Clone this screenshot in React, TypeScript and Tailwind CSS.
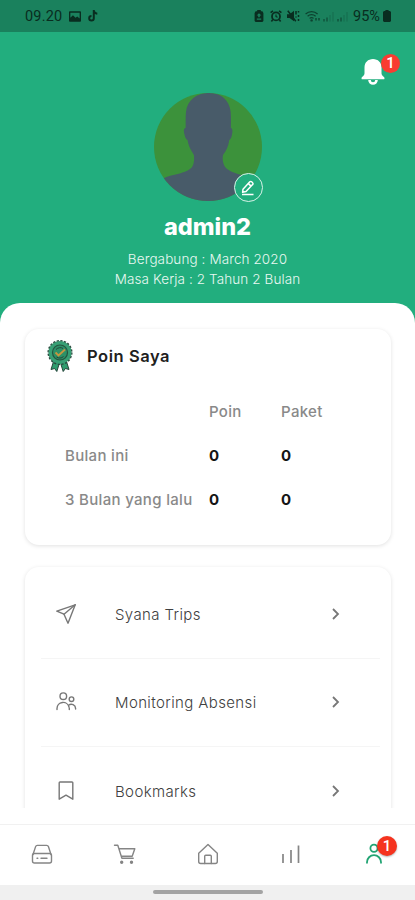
import type { ReactNode } from "react";

type IconProps = {
  className?: string;
  children: ReactNode;
};

function LineIcon({ className = "", children }: IconProps) {
  return (
    <svg
      viewBox="0 0 24 24"
      fill="none"
      stroke="currentColor"
      strokeWidth="1.4"
      strokeLinecap="round"
      strokeLinejoin="round"
      className={`size-6 shrink-0 ${className}`}
    >
      {children}
    </svg>
  );
}

const pointRows = [
  { label: "Bulan ini", poin: 0, paket: 0 },
  { label: "3 Bulan yang lalu", poin: 0, paket: 0 },
];

const menuItems = [
  {
    label: "Syana Trips",
    icon: (
      <LineIcon>
        <path d="M21.2 2.8 2.8 9.2l7.2 3 4 9z" />
        <path d="M21.2 2.8 10 12.2" />
      </LineIcon>
    ),
  },
  {
    label: "Monitoring Absensi",
    icon: (
      <LineIcon>
        <circle cx="9.3" cy="6.2" r="3.3" />
        <path d="M3 19.5v-1a6.1 6.1 0 0 1 12-1.500" />
        <circle cx="17.5" cy="9.2" r="2.3" />
        <path d="M14.6 15.2a4.3 4.3 0 0 1 7 3.300v.5M15.300 19.500v-1.500" />
      </LineIcon>
    ),
  },
  {
    label: "Bookmarks",
    icon: (
      <LineIcon>
        <path d="M6 3h12a.8.8 0 0 1 .8.8v16.4L12 16.1l-6.800 4.100V3.800A.8.8 0 0 1 6 3z" />
      </LineIcon>
    ),
  },
];

function StatusBar() {
  return (
    <div className="flex h-8 shrink-0 items-center bg-[#1a815d] pl-[25px] font-[Roboto] text-[14.5px] text-[#092d20]">
      <span className="mt-px w-[38px] whitespace-nowrap tracking-[0.2px]">09.20</span>

      <svg viewBox="0 0 14 12" className="ml-[6px] h-[11px] w-3">
        <path
          fill="currentColor"
          fillRule="evenodd"
          d="M1 0h12a1 1 0 0 1 1 1v10a1 1 0 0 1-1 1H1a1 1 0 0 1-1-1V1a1 1 0 0 1 1-1zM1.6 1.6v6l3-3 3 3 2-1.6 2.8 2.2V1.6z"
        />
      </svg>

      <svg viewBox="0 0 10 12" className="ml-[7px] h-3 w-[10px]">
        <path
          fill="none"
          stroke="currentColor"
          strokeWidth="2"
          d="M5.8 0v8.2a2.3 2.3 0 1 1-2.3-2.3M5.8.5c.2 2 1.5 3 3.5 3.2"
        />
      </svg>

      <svg viewBox="0 0 10 12" className="ml-[156px] h-3 w-[10px]">
        <path
          fill="currentColor"
          fillRule="evenodd"
          d="M3.2 0h3.6v1.2h1.6L9.4 3v8l-1 1H1.6l-1-1V3l1-1.8h1.6zM5 3.2 2.6 5.4h1.6v1.8h1.6V5.4h1.6zM2.8 8.4v1.3h4.4V8.4z"
        />
      </svg>

      <svg viewBox="0 0 12 12" className="ml-[6px] h-3 w-3" fill="none" stroke="currentColor">
        <circle cx="6" cy="6.4" r="4" strokeWidth="1.8" />
        <path strokeWidth="1.6" d="M.6 2.6 3 .8M11.4 2.6 9 .8M2.8 9.6 1.4 11.4M9.2 9.6l1.4 1.8" />
        <path strokeWidth="1.1" d="M6 4.4v2.2l1.6.6" />
      </svg>

      <svg viewBox="0 0 13 12" className="ml-[5px] h-3 w-[13px]">
        <path fill="currentColor" d="M0 4.2h2.6L7 .8v10.4L2.6 8H0z" />
        <path
          fill="none"
          stroke="currentColor"
          strokeWidth="1.5"
          d="m.8.8 8 10.4M9 1v3.6M11.5 1v1.6M11.5 5v2M11.5 9v2M9 6.4v1"
        />
      </svg>

      <svg viewBox="0 0 17 13" className="ml-[5px] h-[13px] w-[17px] opacity-75">
        <path
          fill="none"
          stroke="currentColor"
          strokeWidth="1.2"
          d="M.6 4a8.6 8.6 0 0 1 12 0M2.6 6.2a5.8 5.8 0 0 1 8 0M4.6 8.4a3 3 0 0 1 4 0"
        />
        <circle cx="6.6" cy="10.4" r="1.2" fill="currentColor" />
        <path stroke="currentColor" strokeWidth="1.4" d="M11 8v2.5M14 8v2.5" />
      </svg>

      <svg viewBox="0 0 28 12" className="ml-px h-3 w-7 opacity-60">
        <path stroke="currentColor" strokeWidth="1.3" d="M1 9v2.6M4 7.5v4.1" />
        <path stroke="currentColor" strokeWidth="1.3" d="M15 9v2.6M18 7.5v4.1" />
        <path
          stroke="currentColor"
          strokeWidth="1.3"
          opacity=".3"
          d="M7 5v6.6M10 2v9.6M21 5v6.6M24 2v9.6"
        />
      </svg>

      <span className="mt-px ml-[2px] w-[27px] whitespace-nowrap text-[14.5px]">95%</span>

      <svg viewBox="0 0 8 12" className="ml-[3px] h-3 w-2">
        <path fill="currentColor" d="M2.4 0h3.2v1H7l1 1v9l-1 1H1l-1-1V2l1-1h1.4z" />
      </svg>
    </div>
  );
}

function Avatar() {
  return (
    <div className="relative size-[108px]">
      <svg viewBox="0 0 108 108" className="size-full">
        <defs>
          <clipPath id="avatar-clip">
            <circle cx="54" cy="54" r="54" />
          </clipPath>
        </defs>
        <g clipPath="url(#avatar-clip)">
          <rect width="108" height="108" fill="#3c923b" />
          <path
            fill="#485b69"
            d="M55 0C43 0 33 7 32 19c-.6 5-.2 11-.4 16-2.4.6-2 4-.7 8 .5 2 1.4 3.600 2.600 4 .8 5 2.600 9 6.400 15 .4 4 .2 8-1.300 11-2 4-7 5.500-12 7.200C20 82 14 82.500 8 86L0 108h108l-4-18c-5-5-12-6.500-20-9-6-2-11-4-13.500-8-1.600-3-2.300-7-1.500-11 3.600-5 5.400-9 6.300-15 1.300-.8 2-2.500 2.500-4.500.9-4 1-7-.9-7.500 0-5 .2-11-.2-16C75.500 7 67 0 55 0z"
          />
        </g>
      </svg>

      <span className="absolute top-[80px] left-[80px] flex size-[29px] items-center justify-center rounded-full border-[1.5px] border-[#d9f3e9] bg-[#22ae7e] text-white">
        <svg
          viewBox="0 0 16 16"
          fill="none"
          stroke="currentColor"
          strokeWidth="1.5"
          strokeLinejoin="round"
          className="size-4"
        >
          <path d="m3 9.2 6.8-7.4a1.3 1.3 0 0 1 1.9 0l.9.9a1.3 1.3 0 0 1 0 1.9L6 11.6l-3.4.7zM8.5 3.6l2.5 2.5M2 14.6h11.5" />
        </svg>
      </span>
    </div>
  );
}

function RibbonIcon() {
  return (
    <svg viewBox="0 0 26 34" className="h-[34px] w-[26px] shrink-0">
      <g stroke="#25453a" strokeWidth="1" strokeLinejoin="round">
        <path fill="#2f9c6e" d="m7 21-3 9.5 3.6-1 2.200 3 3-9.500z" />
        <path fill="#2f9c6e" d="m19 21 3 9.5-3.600-1-2.200 3-3-9.500z" />
      </g>
      <circle cx="13" cy="13.5" r="11.6" fill="#379f74" />
      <circle
        cx="13"
        cy="13.5"
        r="11.9"
        fill="none"
        stroke="#28493d"
        strokeWidth="1.3"
        strokeDasharray="2.2 1.54"
      />
      <circle cx="13" cy="13.5" r="7.5" fill="#2c9167" stroke="#25543f" strokeWidth="1.2" />
      <path
        fill="none"
        stroke="#25453a"
        strokeWidth="1"
        d="M9 10.5c2-2 5-2.5 7-1M9.5 18c2 1.5 5 1.5 7-.5"
      />
      <path fill="none" stroke="#c7963f" strokeWidth="1.8" d="m8.5 13.5 3 3 6.5-6" />
    </svg>
  );
}

function ProfileHeader() {
  return (
    <header className="relative flex h-[271px] shrink-0 flex-col items-center pt-[61px] text-white">
      <div className="absolute top-[26px] left-[361px]">
        <svg viewBox="0 0 24 28" fill="currentColor" className="h-[28px] w-6">
          <path d="M12 1C7 1 3.5 4.5 3.5 9.5V15c0 1.5-.5 2.4-1.5 3.2-1 .7-1.5 1.2-1.5 2.2 0 .6.4.9 1 .9h21c.6 0 1-.3 1-.9 0-1-.5-1.5-1.5-2.2-1-.8-1.5-1.7-1.5-3.2V9.500C20.5 4.500 17 1 12 1z" />
          <path d="M7.2 22h2.6a2.2 2.2 0 0 0 4.4 0h2.6a4.8 4.8 0 0 1-9.6 0z" />
        </svg>
        <span className="absolute -top-[4px] left-[20px] flex size-[19px] items-center justify-center rounded-full bg-[#f93c31] font-[Roboto] text-[15px] font-medium">
          1
        </span>
      </div>

      <Avatar />

      <h1 className="mt-[10px] text-[23.5px] leading-[32px] font-extrabold">
        admin2
      </h1>

      <div className="mt-[6px] text-center text-[13.5px] leading-5 font-light tracking-[0.1px] text-[#e9f8f2]">
        <p>Bergabung : March 2020</p>
        <p>Masa Kerja : 2 Tahun 2 Bulan</p>
      </div>
    </header>
  );
}

function PointsCard() {
  return (
    <section className="h-[216px] shrink-0 rounded-[14px] bg-white shadow-[0_1px_4px_rgba(0,0,0,0.12)]">
      <div className="flex h-[60px] items-center gap-[14px] pl-[22px]">
        <div className="-mt-[7px]">
          <RibbonIcon />
        </div>
        <h2 className="-mt-[6px] text-[16.5px] font-semibold tracking-[0.55px] text-[#202020]">
          Poin Saya
        </h2>
      </div>

      <div className="grid auto-rows-[44px] grid-cols-[144px_72px_1fr] items-center pt-px pl-10 text-[15px] font-medium tracking-[0.32px] text-[#898989]">
        <span />
        <span>Poin</span>
        <span>Paket</span>
        {pointRows.map((row) => (
          <div key={row.label} className="contents">
            <span className="whitespace-nowrap">{row.label}</span>
            <span className="font-bold text-[#151515]">{row.poin}</span>
            <span className="font-bold text-[#151515]">{row.paket}</span>
          </div>
        ))}
      </div>
    </section>
  );
}

function MenuCard() {
  return (
    <section className="shrink-0 rounded-t-[14px] bg-white pt-[3px] pr-[11px] pl-4 shadow-[0_1px_4px_rgba(0,0,0,0.12)]">
      {menuItems.map((item) => (
        <div
          key={item.label}
          className="flex h-[88.5px] items-center border-b border-[#f5f5f5] pl-[13px] text-[#777]"
        >
          {item.icon}
          <span className="mt-[2px] ml-[37px] flex-1 text-[15px] font-light tracking-[0.38px] text-[#404040]">
            {item.label}
          </span>
          <svg
            viewBox="0 0 10 14"
            fill="none"
            stroke="currentColor"
            strokeWidth="1.8"
            className="mr-[39px] h-[14px] w-[10px]"
          >
            <path d="m2 2 5 5-5 5" />
          </svg>
        </div>
      ))}
    </section>
  );
}

function BottomNav() {
  return (
    <nav className="flex h-[61px] shrink-0 items-center justify-between border-t border-[#f1f1f1] bg-white pr-[29px] pb-[2px] pl-[30px] text-[#858585]">
      <LineIcon>
        <path d="M3 12.5 5.6 4.6a1.8 1.8 0 0 1 1.7-1.2h9.4a1.8 1.8 0 0 1 1.7 1.2L21 12.5" />
        <rect x="2.5" y="11.5" width="19" height="9.5" rx="2" />
        <path d="M7 16.2h.8M11 16.2h6" />
      </LineIcon>

      <LineIcon>
        <path d="M1.5 3.2h3.3l4.1 13h11.3M6 6.700h15.800l-2.600 7.500H8.200" />
        <circle cx="8.7" cy="20.3" r="1" fill="currentColor" />
        <circle cx="18.5" cy="20.3" r="1" fill="currentColor" />
      </LineIcon>

      <LineIcon>
        <path d="M2.7 11.3 12 2.5l9.3 8.8v8.2a2 2 0 0 1-2 2H4.7a2 2 0 0 1-2-2z" />
        <path d="M8.7 21.5v-7.2a1 1 0 0 1 1-1h4.6a1 1 0 0 1 1 1v7.2" />
      </LineIcon>

      <LineIcon>
        <path strokeLinecap="butt" strokeWidth="1.7" d="M4 21v-9M12 21V8M19.5 21V3.5" />
      </LineIcon>

      <div className="relative text-[#21a473]">
        <LineIcon>
          <circle cx="12" cy="6.3" r="3.6" strokeWidth="1.8" />
          <path strokeWidth="1.8" d="M5 20.8v-.6a7 7 0 0 1 14 0v.6" />
        </LineIcon>
        <span className="absolute -top-[6px] left-[15px] flex size-5 items-center justify-center rounded-full bg-[#f5331f] font-[Roboto] text-[15px] font-medium text-white shadow-[0_1px_2px_rgba(0,0,0,0.3)]">
          1
        </span>
      </div>
    </nav>
  );
}

export default function App() {
  return (
    <div className="flex h-[900px] w-[415px] flex-col overflow-hidden bg-[#22ae7e] font-[Inter,sans-serif]">
      <StatusBar />
      <ProfileHeader />

      <main className="flex min-h-0 flex-1 flex-col rounded-t-[20px] bg-white pb-4">
        <div className="flex min-h-0 flex-1 flex-col gap-[22px] overflow-hidden pt-[26px] pr-6 pl-[25px]">
          <PointsCard />
          <MenuCard />
        </div>
      </main>

      <BottomNav />

      <div className="flex h-[15px] shrink-0 justify-center bg-[#f0f0f0] pt-[5px]">
        <span className="h-1 w-[110px] rounded-full bg-[#a3a3a3]" />
      </div>
    </div>
  );
}
